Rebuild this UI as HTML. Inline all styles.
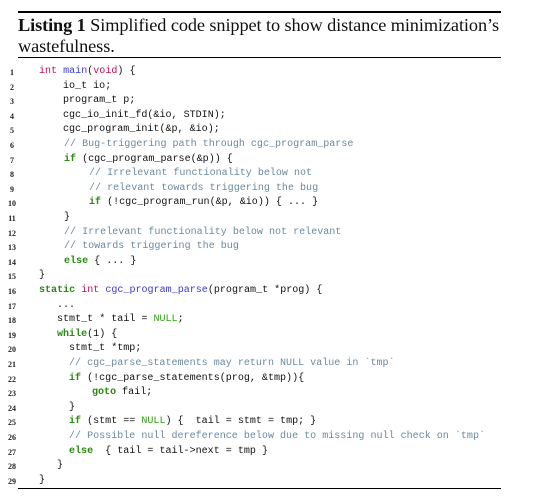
<!DOCTYPE html><html><head><style>
body{margin:0;width:542px;height:499px;background:#fff;position:relative;font-family:"Liberation Mono",monospace;overflow:hidden}
.r{position:absolute;left:18px;width:483px;background:#000}
.cap{position:absolute;left:18px;top:15px;width:495px;font:18.3px/21px "Liberation Serif",serif;color:#111;letter-spacing:-0.1px}
.n{position:absolute;left:6px;width:12px;text-align:center;font:bold 8px "Liberation Serif",serif;color:#222}
.c{position:absolute;font-size:10.05px;white-space:pre;color:#111}
.k{color:#2a8a12;font-weight:bold}.t{color:#c8104f}.f{color:#3a3ad0}.m{color:#6a8aa0}.g{color:#2fa010}
</style></head><body>
<div class="r" style="top:11px;height:1.5px"></div>
<div class="cap"><b>Listing 1</b> Simplified code snippet to show distance minimization’s wastefulness.</div>
<div class="r" style="top:57px;height:1px"></div>
<div class="r" style="top:488px;height:1px"></div>
<div id="code"></div>
<script>
var L=[[39,'<span class="t">int</span> <span class="f">main</span>(<span class="t">void</span>) {'],
[63,'io_t io;'],[63,'program_t p;'],[63,'cgc_io_init_fd(&amp;io, STDIN);'],[63,'cgc_program_init(&amp;p, &amp;io);'],
[64,'<span class="m">// Bug-triggering path through cgc_program_parse</span>'],
[64,'<span class="k">if</span> (cgc_program_parse(&amp;p)) {'],
[89,'<span class="m">// Irrelevant functionality below not</span>'],
[89,'<span class="m">// relevant towards triggering the bug</span>'],
[89,'<span class="k">if</span> (!cgc_program_run(&amp;p, &amp;io)) { ... }'],
[64,'}'],[64,'<span class="m">// Irrelevant functionality below not relevant</span>'],
[64,'<span class="m">// towards triggering the bug</span>'],
[64,'<span class="k">else</span> { ... }'],[39,'}'],
[39,'<span class="k">static</span> <span class="t">int</span> <span class="f">cgc_program_parse</span>(program_t *prog) {'],
[57,'...'],[57,'stmt_t * tail = <span class="g">NULL</span>;'],[57,'<span class="k">while</span>(1) {'],
[69,'stmt_t *tmp;'],[69,'<span class="m">// cgc_parse_statements may return NULL value in `tmp`</span>'],
[69,'<span class="k">if</span> (!cgc_parse_statements(prog, &amp;tmp)){'],
[92,'<span class="k">goto</span> fail;'],[69,'}'],
[69,'<span class="k">if</span> (stmt == <span class="g">NULL</span>) {  tail = stmt = tmp; }'],
[69,'<span class="m">// Possible null dereference below due to missing null check on `tmp`</span>'],
[69,'<span class="k">else</span>  { tail = tail-&gt;next = tmp }'],[57,'}'],[39,'}']];
var h='';L.forEach(function(l,i){var y=66+i*14.6;h+='<div class="n" style="top:'+(y+2)+'px">'+(i+1)+'</div><div class="c" style="left:'+l[0]+'px;top:'+y+'px">'+l[1]+'</div>';});
document.getElementById('code').innerHTML=h;
</script>
</body></html>
